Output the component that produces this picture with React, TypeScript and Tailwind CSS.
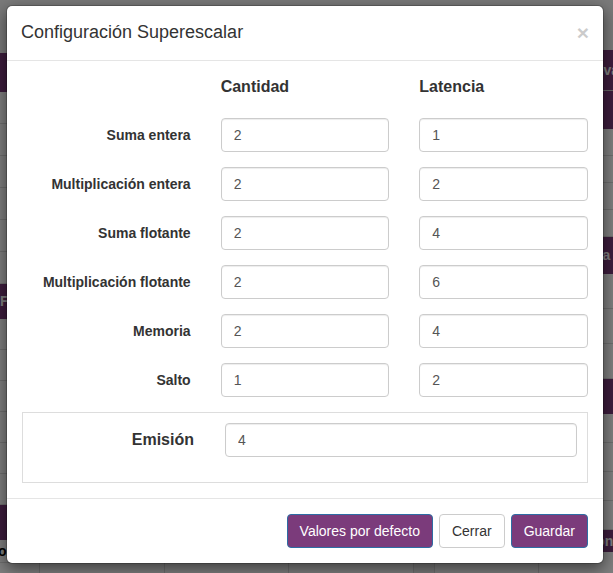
import React from "react";

const units = [
  { name: "Suma entera", qty: "2", lat: "1" },
  { name: "Multiplicación entera", qty: "2", lat: "2" },
  { name: "Suma flotante", qty: "2", lat: "4" },
  { name: "Multiplicación flotante", qty: "2", lat: "6" },
  { name: "Memoria", qty: "2", lat: "4" },
  { name: "Salto", qty: "1", lat: "2" },
];

const Field: React.FC<{ value: string }> = ({ value }) => (
  <input
    type="text"
    defaultValue={value}
    className="h-[34px] w-full rounded-[4px] border border-[#ccc] bg-white px-[12px] text-[14px] text-[#555] shadow-[inset_0_1px_1px_rgba(0,0,0,0.075)] outline-none"
  />
);

const Rows: React.FC<{ count: number; h: string }> = ({ count, h }) => (
  <>
    {Array.from({ length: count }).map((_, i) => (
      <div key={i} className={`${h} border-b border-[#ddd] bg-white`} />
    ))}
  </>
);

// page behind the modal, mostly hidden by the backdrop
const Background: React.FC = () => (
  <div className="flex h-full w-full">
    {/* left column */}
    <div className="flex w-[415px] flex-col">
      <div className="h-[53px] shrink-0" />
      <div className="h-[39px] shrink-0 bg-[#7a3b7a]" />
      <Rows count={6} h="h-[32px] shrink-0" />
      <div className="flex h-[35px] shrink-0 items-center bg-[#7a3b7a] text-[14px] font-bold text-white">
        FP
      </div>
      <Rows count={6} h="h-[31px] shrink-0" />
      <div className="h-[35px] shrink-0 bg-[#7a3b7a]" />
      <div className="flex h-[23px] shrink-0 items-end border-b border-[#ddd] bg-white text-[14px] font-bold text-black">
        <span className="-ml-[2px]">o</span>
      </div>
      <div className="grid h-[20px] shrink-0 grid-cols-[40px_125px_124px_125px] bg-white">
        <div className="border-r border-[#ddd]" />
        <div className="border-r border-[#ddd]" />
        <div className="border-r border-[#ddd]" />
        <div className="border-r border-[#ddd]" />
      </div>
    </div>

    {/* right column */}
    <div className="ml-[20px] flex flex-1 flex-col">
      <div className="h-[50px] shrink-0" />
      <div className="flex h-[41px] shrink-0 items-center whitespace-nowrap border-b border-[#ccc] bg-[#7a3b7a] pl-[143px] text-[14px] font-bold text-white">
        Nueva
      </div>
      <div className="h-[38px] shrink-0 bg-[#7a3b7a]" />
      <Rows count={4} h="h-[27px] shrink-0" />
      <div className="flex h-[37px] shrink-0 items-center whitespace-nowrap bg-[#7a3b7a] pl-[146px] text-[14px] font-bold text-white">
        Cola
      </div>
      <Rows count={3} h="h-[35px] shrink-0" />
      <div className="h-[35px] shrink-0 bg-[#7a3b7a]" />
      <Rows count={4} h="h-[29px] shrink-0" />
      <div className="flex h-[22px] shrink-0 items-center whitespace-nowrap bg-[#7a3b7a] pl-[152px] text-[14px] font-bold text-white">
        Cont
      </div>
      <div className="grid h-[40px] shrink-0 grid-cols-[105px_1fr] bg-white text-[14px] font-bold text-black">
        <div className="flex items-end justify-center border-r border-l border-[#ddd] pl-[30px]">
          Inst
        </div>
        <div className="flex items-end pl-[42px]">Oi</div>
      </div>
    </div>
  </div>
);

export default function App() {
  return (
    <div className="relative h-[573px] w-[613px] overflow-hidden bg-[#f5f5f5] font-['Liberation_Sans',Arial,sans-serif] text-[14px] text-[#333]">
      <Background />

      {/* backdrop */}
      <div className="absolute inset-0 bg-black/50" />

      {/* modal */}
      <div className="absolute inset-0 pl-[6px] pt-[5px]">
        <div className="w-[598px] rounded-[6px] border border-black/20 bg-white bg-clip-padding shadow-[0_5px_15px_rgba(0,0,0,0.5)]">
          {/* header */}
          <div className="flex items-start justify-between border-b border-[#e5e5e5] px-[14px] pb-[16px] pt-[14px]">
            <h4 className="text-[18px] leading-[24px] text-[#333]">
              Configuración Superescalar
            </h4>
            <button className="mt-[2px] text-[21px] font-bold leading-none text-black opacity-20">
              ×
            </button>
          </div>

          {/* body */}
          <div className="pb-[15px] pt-[15px]">
            <div className="mb-[20px] grid grid-cols-3 text-[16px] font-bold leading-[22px]">
              <div className="px-[15px]" />
              <div className="px-[15px]">Cantidad</div>
              <div className="px-[15px]">Latencia</div>
            </div>

            {units.map((u) => (
              <div key={u.name} className="mb-[15px] grid grid-cols-3 items-center">
                <label className="px-[15px] text-right font-bold">{u.name}</label>
                <div className="px-[15px]">
                  <Field value={u.qty} />
                </div>
                <div className="px-[15px]">
                  <Field value={u.lat} />
                </div>
              </div>
            ))}

            <div className="mx-[15px] border border-[#ddd] px-[10px] pb-[25px] pt-[10px]">
              <div className="grid grid-cols-[161px_1fr] items-center gap-x-[31px]">
                <label className="text-right text-[16px] font-bold">Emisión</label>
                <Field value="4" />
              </div>
            </div>
          </div>

          {/* footer */}
          <div className="flex justify-end gap-[6px] border-t border-[#e5e5e5] p-[15px]">
            <button className="h-[34px] rounded-[4px] border border-[#2e6da4] bg-[#7b3b7b] px-[12px] text-[14px] text-white">
              Valores por defecto
            </button>
            <button className="h-[34px] rounded-[4px] border border-[#ccc] bg-white px-[12px] text-[14px] text-[#333]">
              Cerrar
            </button>
            <button className="h-[34px] rounded-[4px] border border-[#2e6da4] bg-[#7b3b7b] px-[12px] text-[14px] text-white">
              Guardar
            </button>
          </div>
        </div>
      </div>
    </div>
  );
}
